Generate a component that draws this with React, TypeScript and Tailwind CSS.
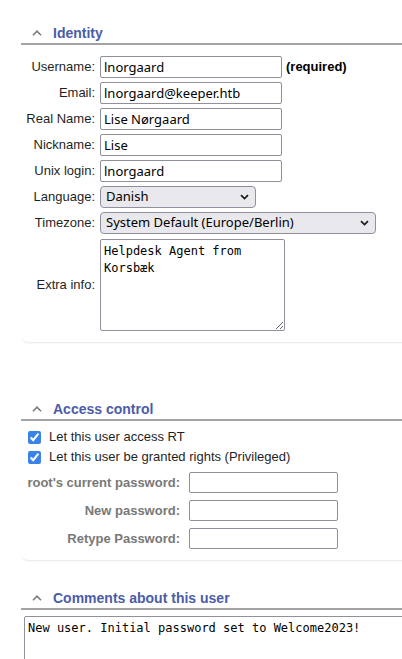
import React from "react";

function Caret() {
    return (
        <svg width="10" height="6" viewBox="0 0 10 6" className="shrink-0">
            <path d="M1 5.2 L5 1.2 L9 5.2" fill="none" stroke="#7a7a7a" strokeWidth="1.6" />
        </svg>
    );
}

function SectionHeader({ title }: { title: string }) {
    return (
        <div className="flex h-[20px] items-center gap-[11px] pl-[11px] pt-[1px] border-b-2 border-[#a3a3a3] box-content">
            <Caret />
            <span className="font-['Liberation_Sans',Arial,sans-serif] text-[14px] font-bold text-[#4b5ca9]">
                {title}
            </span>
        </div>
    );
}

function TextInput({ value, width = "w-[182px]" }: { value?: string; width?: string }) {
    return (
        <input
            type="text"
            defaultValue={value}
            className={`${width} h-[22px] rounded-[2px] border border-[#8f8f9d] bg-white px-[3px] font-['Noto_Sans',sans-serif] text-[13px] text-black outline-none`}
        />
    );
}

function SelectBox({ value, width }: { value: string; width: string }) {
    return (
        <div
            className={`${width} flex h-[22px] items-center justify-between rounded-[4px] border border-[#8f8f9d] bg-[#e9e9ed] pl-[5px] pr-[6px] font-['Noto_Sans',sans-serif] text-[13px] text-black`}
        >
            <span>{value}</span>
            <svg width="9" height="6" viewBox="0 0 9 6">
                <path d="M1 1.2 L4.5 4.6 L8 1.2" fill="none" stroke="#1a1a1a" strokeWidth="1.7" />
            </svg>
        </div>
    );
}

const identityRows: { label: string; value: string; extra?: string }[] = [
    { label: "Username:", value: "lnorgaard", extra: "(required)" },
    { label: "Email:", value: "lnorgaard@keeper.htb" },
    { label: "Real Name:", value: "Lise Nørgaard" },
    { label: "Nickname:", value: "Lise" },
    { label: "Unix login:", value: "lnorgaard" },
];

const passwordRows = ["root's current password:", "New password:", "Retype Password:"];

export default function App() {
    return (
        <div className="w-full h-[659px] overflow-hidden bg-white pl-[21px] font-['Liberation_Sans',Arial,sans-serif] text-[13px] text-[#1f1f1f]">
            <div className="w-[440px]">
                {/* Identity */}
                <div className="mt-[22px]">
                    <SectionHeader title="Identity" />
                    <div className="rounded-b-[7px] shadow-[0_2px_2px_-1px_rgba(0,0,0,0.1)] pt-[11px] pb-[11px]">
                        <div className="grid grid-cols-[74px_auto] gap-x-[5px] gap-y-[4px] items-center">
                            {identityRows.map((r) => (
                                <React.Fragment key={r.label}>
                                    <label className="text-right whitespace-nowrap">{r.label}</label>
                                    <div className="flex items-center gap-[4px]">
                                        <TextInput value={r.value} />
                                        {r.extra && <span className="font-bold text-black">{r.extra}</span>}
                                    </div>
                                </React.Fragment>
                            ))}
                            <label className="text-right">Language:</label>
                            <SelectBox value="Danish" width="w-[156px]" />
                            <label className="text-right">Timezone:</label>
                            <SelectBox value="System Default (Europe/Berlin)" width="w-[276px]" />
                            <label className="text-right">Extra info:</label>
                            <textarea
                                defaultValue={"Helpdesk Agent from\nKorsbæk"}
                                className="mt-[1px] w-[185px] h-[92px] rounded-[2px] border border-[#8f8f9d] p-[3px] font-['DejaVu_Sans_Mono',monospace] text-[12px] leading-[17px] text-black outline-none"
                            />
                        </div>
                    </div>
                </div>

                {/* Access control */}
                <div className="mt-[56px]">
                    <SectionHeader title="Access control" />
                    <div className="rounded-b-[7px] shadow-[0_2px_2px_-1px_rgba(0,0,0,0.1)] pt-[6px] pb-[11px]">
                        {["Let this user access RT", "Let this user be granted rights (Privileged)"].map((t) => (
                            <label key={t} className="flex h-[20px] items-center gap-[8px] pl-[7px]">
                                <input
                                    type="checkbox"
                                    defaultChecked
                                    className="m-0 h-[13px] w-[13px] accent-[#3a83e6]"
                                />
                                <span>{t}</span>
                            </label>
                        ))}
                        <div className="mt-[5px] flex flex-col gap-[7px]">
                            {passwordRows.map((p) => (
                                <div key={p} className="flex items-center gap-[9px]">
                                    <span className="w-[159px] text-right font-bold text-[#787878]">{p}</span>
                                    <input
                                        type="password"
                                        className="w-[149px] h-[21px] rounded-[2px] border border-[#8f8f9d] bg-white outline-none"
                                    />
                                </div>
                            ))}
                        </div>
                    </div>
                </div>

                {/* Comments */}
                <div className="mt-[27px]">
                    <SectionHeader title="Comments about this user" />
                    <div className="pt-[6px] pl-[3px]">
                        <textarea
                            defaultValue="New user. Initial password set to Welcome2023!"
                            className="w-[420px] h-[90px] rounded-[2px] border border-[#8f8f9d] p-[3px] font-['DejaVu_Sans_Mono',monospace] text-[12px] leading-[17px] text-black outline-none"
                        />
                    </div>
                </div>
            </div>
        </div>
    );
}
